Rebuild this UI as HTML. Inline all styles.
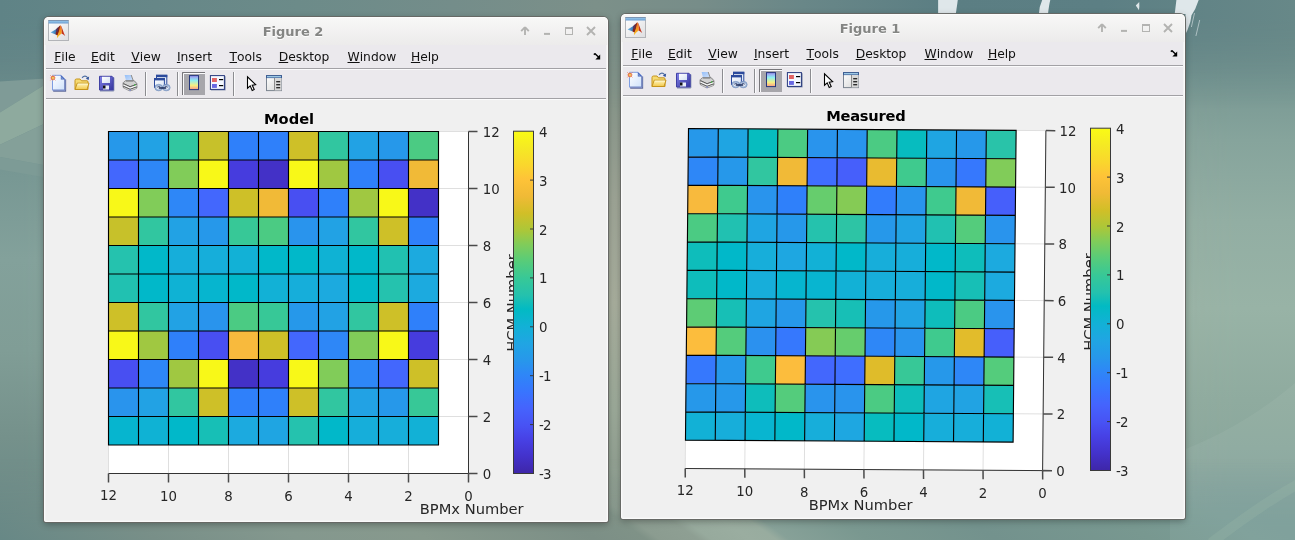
<!DOCTYPE html>
<html><head><meta charset="utf-8"><title>Figures</title><style>
html,body{margin:0;padding:0}
body{font-kerning:none;width:1295px;height:540px;overflow:hidden;position:relative;background:#6f908e;font-family:"DejaVu Sans","Liberation Sans",sans-serif;}
#bg{position:absolute;left:0;top:0}
.win{position:absolute;width:564px;height:505px;border-radius:5px 5px 2px 2px;background:#f3f3f3;box-shadow:0 0 0 1px rgba(102,103,100,.95),0 2px 7px rgba(0,0,0,.33);}
.win::after{content:"";position:absolute;left:0;top:0;right:0;bottom:0;border:1px solid rgba(255,255,255,.6);border-radius:4px 4px 2px 2px;pointer-events:none}
.tb{position:absolute;left:0;top:0;width:564px;height:28px;background:linear-gradient(#f8f8f7,#ecebeb);border-radius:5px 5px 0 0}
.tt{will-change:transform;position:absolute;left:29px;width:440px;top:7px;text-align:center;font-weight:bold;font-size:13px;line-height:16px;color:#848583;text-shadow:0 1px 0 rgba(255,255,255,.9)}
.ico{position:absolute;left:4px;top:3px}
.btns{position:absolute;left:470px;top:6px}
.menu{will-change:transform;position:absolute;left:2px;top:28px;width:560px;height:23px;background:#ebe9ed}
.menu span.m{position:absolute;top:4px;font-size:12.3px;line-height:16px;color:#111;white-space:nowrap}
.menu span.m::first-letter{text-decoration:underline;text-decoration-thickness:1px;text-underline-offset:0.6px}
.sep1{position:absolute;left:2px;top:51px;width:560px;height:1px;background:#a2a1a5}
.sep1b{position:absolute;left:2px;top:52px;width:560px;height:1px;background:#fbfbfc}
.tool{position:absolute;left:2px;top:53px;width:560px;height:28px;background:#ebe9ed}
.sep2{position:absolute;left:2px;top:81px;width:560px;height:1px;background:#a2a1a5}
.sep2b{position:absolute;left:2px;top:82px;width:560px;height:1px;background:#fbfbfc}
.fig{position:absolute;left:2px;top:83px;width:560px;height:420px;background:#f0f0f0}
.plot{position:absolute;left:0;top:0;will-change:transform}
.plot text{font-family:"DejaVu Sans","Liberation Sans",sans-serif}
</style></head><body>
<svg id="bg" width="1295" height="540" viewBox="0 0 1295 540"><defs><linearGradient id="gL" x1="0" y1="0" x2="0" y2="1"><stop offset="0" stop-color="#618385"/><stop offset="0.11" stop-color="#698989"/><stop offset="0.33" stop-color="#789894"/><stop offset="0.48" stop-color="#83a19b"/><stop offset="0.65" stop-color="#809d96"/><stop offset="0.81" stop-color="#75918b"/><stop offset="1" stop-color="#678886"/></linearGradient><linearGradient id="gC" x1="0" y1="0" x2="0" y2="1"><stop offset="0" stop-color="#7c9089"/><stop offset="0.09" stop-color="#82938a"/><stop offset="0.19" stop-color="#8a988c"/><stop offset="0.37" stop-color="#9ea596"/><stop offset="0.56" stop-color="#a8ae9d"/><stop offset="0.76" stop-color="#9caa99"/><stop offset="0.93" stop-color="#8c9b8e"/><stop offset="1" stop-color="#7c8f86"/></linearGradient><linearGradient id="gR" x1="0" y1="0" x2="0" y2="1"><stop offset="0" stop-color="#668688"/><stop offset="0.06" stop-color="#6c8c8a"/><stop offset="0.15" stop-color="#789893"/><stop offset="0.26" stop-color="#86a49c"/><stop offset="0.41" stop-color="#92aea3"/><stop offset="0.57" stop-color="#98b3a6"/><stop offset="0.74" stop-color="#8fab9f"/><stop offset="0.83" stop-color="#8ba89d"/><stop offset="0.93" stop-color="#82a29a"/><stop offset="1" stop-color="#7b9d97"/></linearGradient><linearGradient id="gT" x1="0" y1="0" x2="1" y2="0"><stop offset="0" stop-color="#5f8386"/><stop offset="0.12" stop-color="#668788"/><stop offset="0.23" stop-color="#6c8b89"/><stop offset="0.35" stop-color="#748d8a"/><stop offset="0.46" stop-color="#7c9089"/><stop offset="0.54" stop-color="#778d89"/><stop offset="0.62" stop-color="#698788"/><stop offset="0.73" stop-color="#5b7e83"/><stop offset="0.85" stop-color="#5c7f84"/><stop offset="1" stop-color="#678888"/></linearGradient><linearGradient id="gB" gradientUnits="userSpaceOnUse" x1="0" y1="0" x2="1295" y2="0"><stop offset="0" stop-color="#678886"/><stop offset="0.12" stop-color="#788f88"/><stop offset="0.23" stop-color="#84988e"/><stop offset="0.33" stop-color="#87998d"/><stop offset="0.46" stop-color="#7c8f86"/><stop offset="0.5" stop-color="#7f9287"/><stop offset="0.51" stop-color="#8b9c90"/><stop offset="0.54" stop-color="#8e9f93"/><stop offset="0.55" stop-color="#97aa9d"/><stop offset="0.58" stop-color="#9aada0"/><stop offset="0.6" stop-color="#98ac9f"/><stop offset="0.61" stop-color="#87a198"/><stop offset="0.67" stop-color="#7a9890"/><stop offset="0.77" stop-color="#73928d"/><stop offset="0.89" stop-color="#789890"/><stop offset="0.97" stop-color="#7b9d97"/><stop offset="1" stop-color="#7a9c97"/></linearGradient><linearGradient id="aL" x1="0" y1="0" x2="1" y2="0"><stop offset="0" stop-color="#fff"/><stop offset="0.0154" stop-color="#fff"/><stop offset="0.474" stop-color="#000"/><stop offset="1" stop-color="#000"/></linearGradient><linearGradient id="aR" x1="0" y1="0" x2="1" y2="0"><stop offset="0" stop-color="#000"/><stop offset="0.474" stop-color="#000"/><stop offset="0.9575" stop-color="#fff"/><stop offset="1" stop-color="#fff"/></linearGradient><linearGradient id="aT" x1="0" y1="0" x2="0" y2="1"><stop offset="0" stop-color="#fff"/><stop offset="0.03" stop-color="#fff"/><stop offset="0.2" stop-color="#000"/><stop offset="1" stop-color="#000"/></linearGradient><linearGradient id="aB" x1="0" y1="0" x2="0" y2="1"><stop offset="0" stop-color="#000"/><stop offset="0.85" stop-color="#000"/><stop offset="0.975" stop-color="#fff"/><stop offset="1" stop-color="#fff"/></linearGradient><mask id="mL" maskUnits="userSpaceOnUse" x="0" y="0" width="1295" height="540"><rect width="1295" height="540" fill="url(#aL)"/></mask><mask id="mR" maskUnits="userSpaceOnUse" x="0" y="0" width="1295" height="540"><rect width="1295" height="540" fill="url(#aR)"/></mask><mask id="mT" maskUnits="userSpaceOnUse" x="0" y="0" width="1295" height="540"><rect width="1295" height="540" fill="url(#aT)"/></mask><mask id="mB" maskUnits="userSpaceOnUse" x="-300" y="0" width="1900" height="540"><rect x="-300" width="1900" height="540" fill="url(#aB)"/></mask></defs><rect width="1295" height="540" fill="url(#gC)"/><rect width="1295" height="540" fill="url(#gL)" mask="url(#mL)"/><rect width="1295" height="540" fill="url(#gR)" mask="url(#mR)"/><rect width="1295" height="540" fill="url(#gT)" mask="url(#mT)"/><rect x="-300" width="1900" height="540" fill="url(#gB)" mask="url(#mB)" transform="translate(-756 0) skewX(54.46)"/><polygon points="0,81.5 46,78.5 46,84 0,112.5" fill="#7f9b97"/><polygon points="0,112.5 46,84 46,123 0,144.7" fill="#8eaa9e"/><polygon points="0,144.7 46,123 46,165.5 0,157" fill="#84a099"/><polygon points="0,157 46,165.5 46,177.4 0,169.6" fill="#7d9b96"/><path d="M1170,455 Q1240,430 1295,383 L1295,540 L1170,540Z" fill="#fff" opacity=".05"/><path d="M1211,543 Q1262,504 1298,484" fill="none" stroke="#a6c4b0" stroke-width="10" opacity=".2"/><g fill="#dfe7ea"><polygon points="938.1,0 957.8,0 955.8,14 938.1,14"/><path d="M1042.2,0 L1050.3,0 Q1049,5 1048,14 L1038.9,14 Q1039,7 1042.2,0Z"/><path d="M1139.2,2 L1135.8,5.6 L1139,10.2 Q1139.6,6 1139.2,2Z"/><path d="M1176.4,0 L1198.7,0 L1195.2,9 L1191.5,15.3 L1190.3,22 L1187.5,30 L1185.5,34 L1185.5,14 L1174.7,14Z"/><path d="M1194.5,13 L1191.4,27 M1199.7,20 L1195.9,36" stroke="#dfe7ea" stroke-width=".8" fill="none" opacity=".75"/></g></svg>
<div class="win" style="left:44px;top:17px"><div class="tb"><svg class="ico" width="21" height="21" viewBox="0 0 21 21">
<defs><linearGradient id="ib" x1="0" y1="0" x2="1" y2="1"><stop offset="0" stop-color="#ffffff"/><stop offset="1" stop-color="#dedee0"/></linearGradient>
<linearGradient id="it" x1="0" y1="0" x2="0" y2="1"><stop offset="0" stop-color="#4676ae"/><stop offset="0.34" stop-color="#8cbee6"/><stop offset="1" stop-color="#6a9cd0"/></linearGradient>
<linearGradient id="ibl" x1="0" y1="0" x2="1" y2="0"><stop offset="0" stop-color="#6ab8e8"/><stop offset="1" stop-color="#2c5c9e"/></linearGradient>
<linearGradient id="ior" x1="0" y1="0" x2="0" y2="1"><stop offset="0" stop-color="#ee6c18"/><stop offset="0.55" stop-color="#f69a1e"/><stop offset="1" stop-color="#f8c424"/></linearGradient></defs>
<rect x="0.5" y="0.5" width="20" height="20" fill="url(#ib)" stroke="#b2b4b8"/>
<rect x="0.5" y="0.5" width="20" height="3" fill="url(#it)"/>
<path d="M2.6,12.4 L8.4,9 L10.2,10.8 L7.6,14.4Z" fill="url(#ibl)"/>
<path d="M7.6,14.4 L8.4,9 L12.3,5.2 L11.8,10 L10,15.8Z" fill="#86241a"/>
<path d="M8.4,9 L10.4,7 L9.6,11.6 L8.2,12.4Z" fill="#4a3a6a"/>
<path d="M12.3,5.2 Q13.2,6 13.8,9.5 Q14,12.5 13.6,13.6 Q11.2,15.2 8.9,18.2 Q8.6,16.4 10,14 Q11.6,10.5 12.3,5.2Z" fill="url(#ior)"/>
<path d="M12.3,5.2 Q13.4,5.6 14.7,9.8 Q15.9,13.8 17.2,15.9 Q15.2,14.3 13.6,13.6 Q14,12 13.8,9.5 Q13.2,6 12.3,5.2Z" fill="#c4321a"/>
</svg><div class="tt">Figure 2</div><svg class="btns" width="90" height="16" viewBox="470 6 90 16"><path d="M481,10.2 L477.2,14.2 M481,10.2 L484.8,14.2 M481,10.6 L481,17.9" stroke="#b3b3b1" stroke-width="1.9" fill="none" stroke-linecap="butt"/><rect x="500" y="15.9" width="6" height="2" fill="#b3b3b1"/><rect x="521.5" y="10.5" width="7" height="7" fill="none" stroke="#b3b3b1" stroke-width="1"/><rect x="521" y="10" width="8" height="2" fill="#b3b3b1"/><path d="M543,10 L551,18 M551,10 L543,18" stroke="#b3b3b1" stroke-width="1.9" fill="none"/></svg></div><div class="menu"><span class="m" style="left:8.2px">File</span><span class="m" style="left:45px">Edit</span><span class="m" style="left:85.3px">View</span><span class="m" style="left:130.9px">Insert</span><span class="m" style="left:183.5px">Tools</span><span class="m" style="left:232.7px">Desktop</span><span class="m" style="left:301.5px">Window</span><span class="m" style="left:364.9px">Help</span><svg style="position:absolute;left:546.6px;top:8.4px" width="9" height="8" viewBox="0 0 9 8"><path d="M0.8,1.6 L2,0.7 L5.8,4.2" stroke="#000" stroke-width="1.4" fill="none"/><path d="M7.2,1.4 L7.2,6.4 L2.4,6.4 Z" fill="#000"/></svg></div><div class="sep1"></div><div class="sep1b"></div><div class="tool"><svg style="position:absolute;left:0;top:0" width="560" height="28" viewBox="2 53 560 28"><defs>
<linearGradient id="pg" x1="0" y1="0" x2="1" y2="1"><stop offset="0" stop-color="#ffffff"/><stop offset="1" stop-color="#cfe2fb"/></linearGradient>
<linearGradient id="fo" x1="0" y1="0" x2="0" y2="1"><stop offset="0" stop-color="#fff6c0"/><stop offset="1" stop-color="#f2c84a"/></linearGradient>
<linearGradient id="sv" x1="0" y1="0" x2="1" y2="1"><stop offset="0" stop-color="#8282ea"/><stop offset="1" stop-color="#34349c"/></linearGradient>
<linearGradient id="cb" x1="0" y1="0" x2="0" y2="1"><stop offset="0" stop-color="#a08cf2"/><stop offset="0.35" stop-color="#8ff0f0"/><stop offset="0.7" stop-color="#f4f082"/><stop offset="1" stop-color="#fa9a86"/></linearGradient>
<linearGradient id="pr" x1="0" y1="0" x2="0" y2="1"><stop offset="0" stop-color="#e8e8e8"/><stop offset="1" stop-color="#8c8c8c"/></linearGradient>
<linearGradient id="pp" x1="0" y1="0" x2="1" y2="1"><stop offset="0" stop-color="#94bef8"/><stop offset="1" stop-color="#d2e2fa"/></linearGradient>
<linearGradient id="wn" x1="0" y1="0" x2="1" y2="1"><stop offset="0" stop-color="#ffffff"/><stop offset="1" stop-color="#d6e2f4"/></linearGradient>
<linearGradient id="pi" x1="0" y1="0" x2="1" y2="1"><stop offset="0" stop-color="#ffffff"/><stop offset="1" stop-color="#d4d4d4"/></linearGradient>
</defs><g><path d="M9.2,74.1 L21.6,74.1 L21.6,62.4" fill="none" stroke="#626c9c" stroke-width="1.1"/><path d="M8.5,58.3 L17,58.3 L20.8,62.1 L20.8,73.2 L8.5,73.2Z" fill="url(#pg)" stroke="#7d9de2" stroke-width="1"/><path d="M20.8,62.4 L20.8,73.2 L9,73.2" fill="none" stroke="#7482b8" stroke-width="1"/><path d="M16.8,58 L21.2,62.4 L16.8,62.4Z" fill="#4660b2"/><path d="M17.4,59.8 L19.4,61.8 L17.4,61.8Z" fill="#86a8e6"/><g stroke="#e46a40" stroke-width="1" opacity=".9"><path d="M6.5,58.5 L7.5,59.5 M11.3,58.5 L10.3,59.5 M6.5,63.3 L7.5,62.3 M11.3,63.3 L10.3,62.3"/></g><g stroke="#f0a080" stroke-width=".9" opacity=".8"><path d="M8.9,57.9 L8.9,59 M8.9,62.8 L8.9,63.9 M5.9,60.9 L7,60.9 M10.8,60.9 L11.9,60.9"/></g><circle cx="8.9" cy="60.9" r="2.1" fill="#e8744a"/><rect x="8.1" y="60.1" width="1.7" height="1.7" fill="#ece65e"/></g><g><path d="M31,63.5 Q31,62 32.5,62 L36,62 L37.5,63.8 L43,63.8 Q44,63.8 44,65 L44,72.5 L31,72.5Z" fill="#f6da72" stroke="#c6941a" stroke-width="1"/><path d="M31,72.5 L33.2,66.2 L45,66.2 L43,72.5Z" fill="url(#fo)" stroke="#c6941a" stroke-width="1"/><path d="M33.8,67 L44,67" stroke="#fffbe0" stroke-width=".8" fill="none"/><path d="M38.1,60.7 Q41,57.6 43.8,60.8" fill="none" stroke="#4e6ea2" stroke-width="1.25"/><path d="M45.1,59.4 L44.7,63 L41.8,61.7Z" fill="#34549a"/></g><g><path d="M56,73.9 L69.8,73.9 L69.8,60.6" fill="none" stroke="#6a78a0" stroke-width="1"/><path d="M55.5,59.3 L68,59.3 L69.2,60.5 L69.2,73 L55.5,73Z" fill="url(#sv)" stroke="#4040a4" stroke-width="1"/><rect x="58" y="59.8" width="8" height="6.2" fill="url(#wn)"/><rect x="59" y="68.5" width="6" height="4" fill="#e8eef8"/><rect x="59" y="68.5" width="2.5" height="3" fill="#101018"/></g><g><path d="M80.6,58 L87,58 L88.9,64.2 L82.2,64.2Z" fill="url(#pp)"/><path d="M87.2,58 L89.4,64.2" stroke="#8a8a8a" stroke-width="1" fill="none"/><path d="M79,66.4 Q79,65.6 79.8,65 L81.8,63.5 L89.8,63.5 L92.2,65.6 Q93,66.4 93,67.2 L93,70.4 Q93,71.2 92,71.7 L87,73.7 Q86,74.1 85,73.6 L79.8,71 Q79,70.6 79,69.8Z" fill="#9a9a9a" stroke="#787878" stroke-width=".7"/><path d="M79.4,66 L81.9,63.9 L89.6,63.9 L92.6,66.7 L86.1,69.2Z" fill="#d2d2d2"/><path d="M82,64.3 L89.4,64.3" stroke="#8e8e8e" stroke-width=".9"/><path d="M79.4,66.6 L86.1,69.7 L92.6,67.3" fill="none" stroke="#5e5e5e" stroke-width="1"/><path d="M79.4,68 L86.1,71.1 L92.6,68.7" fill="none" stroke="#f8f8f8" stroke-width="1.3"/><path d="M79.4,69.4 L86.1,72.4 L92.6,70" fill="none" stroke="#565656" stroke-width="1"/><path d="M80,70.6 L86,73.3 L92.2,71" fill="none" stroke="#d8d8d8" stroke-width=".9"/><rect x="90" y="67.4" width="1.3" height="1.3" fill="#3cc03c"/><rect x="85.4" y="72.6" width="1.4" height="1" fill="#5a6ad0"/></g><rect x="101" y="55" width="1" height="24" fill="#8c8c90"/><rect x="102" y="55" width="1" height="24" fill="#fbfbfc"/><rect x="133" y="55" width="1" height="24" fill="#8c8c90"/><rect x="134" y="55" width="1" height="24" fill="#fbfbfc"/><rect x="189" y="55" width="1" height="24" fill="#8c8c90"/><rect x="190" y="55" width="1" height="24" fill="#fbfbfc"/><g><rect x="112.5" y="58.3" width="10.3" height="9.5" fill="url(#wn)" stroke="#2c4a9c" stroke-width="1"/><rect x="112" y="57.8" width="11.3" height="2.4" fill="#2c4a9c"/><rect x="110.5" y="61.5" width="9.9" height="9" fill="url(#wn)" stroke="#2c4a9c" stroke-width="1"/><rect x="110" y="61" width="10.9" height="2.4" fill="#2c4a9c"/><ellipse cx="114.7" cy="70.6" rx="3.2" ry="2.6" fill="#e8eef8" stroke="#9db4d6" stroke-width="1.5"/><ellipse cx="122.3" cy="70.6" rx="3.2" ry="2.6" fill="#e8eef8" stroke="#9db4d6" stroke-width="1.5"/><ellipse cx="114.7" cy="70.6" rx="3.9" ry="3.3" fill="none" stroke="#6c86b4" stroke-width=".5"/><ellipse cx="122.3" cy="70.6" rx="3.9" ry="3.3" fill="none" stroke="#6c86b4" stroke-width=".5"/><path d="M113.2,70.2 Q114.7,68.9 116.4,70" fill="none" stroke="#26386c" stroke-width=".9"/><path d="M120.6,70 Q122.3,68.9 123.8,70.2" fill="none" stroke="#26386c" stroke-width=".9"/><rect x="114.6" y="70.3" width="7.8" height="1.5" rx=".7" fill="#1a2a58"/></g><rect x="138" y="55" width="23" height="23" fill="#a7a6ab"/><path d="M138.5,78 L138.5,55.5 L161,55.5" fill="none" stroke="#77767a" stroke-width="1"/><path d="M139.5,78 L139.5,56.5 L161,56.5" fill="none" stroke="#fbfbfc" stroke-width="1"/><rect x="145.5" y="58.6" width="9" height="14" fill="url(#cb)" stroke="#26387c" stroke-width="1"/><rect x="167" y="59.2" width="14.6" height="14.2" fill="#7c88a8"/><rect x="166.4" y="58.6" width="14" height="13.8" fill="#f4f8ff" stroke="#26387c" stroke-width="1"/><rect x="168" y="61" width="4.9" height="4" fill="#e26464"/><rect x="168" y="67" width="4.9" height="3.9" fill="#6868e2"/><rect x="175" y="62" width="4.2" height="1.2" fill="#000"/><rect x="175" y="68" width="4.2" height="1.2" fill="#000"/><path d="M203.5,59.8 L203.5,71.2 L206.2,68.9 L208.2,73.4 L210.2,72.5 L208.2,68.1 L211.6,67.7Z" fill="#fff" stroke="#000" stroke-width="1.1" stroke-linejoin="miter"/><rect x="222.5" y="58.6" width="15" height="15" fill="url(#pi)" stroke="#7c8490" stroke-width="1"/><rect x="222" y="58.1" width="16" height="3" fill="#3c5c94"/><rect x="223" y="59" width="14" height="1.4" fill="#9cc8e4"/><rect x="230.5" y="61" width="7" height="12.4" fill="#d8d8d8"/><rect x="230" y="61" width="1" height="12.4" fill="#8c8c8c"/><rect x="232.2" y="64.2" width="4" height="1.1" fill="#000"/><rect x="232.2" y="67.2" width="4" height="1.1" fill="#000"/><rect x="232.2" y="70.2" width="4" height="1.1" fill="#000"/></svg></div><div class="sep2"></div><div class="sep2b"></div><div class="fig"><svg class="plot" width="560" height="420" viewBox="0 0 560 420"><defs><linearGradient id="par" x1="0" y1="1" x2="0" y2="0"><stop offset="0" stop-color="#3e26a8"/><stop offset="0.05" stop-color="#4332cb"/><stop offset="0.1" stop-color="#4741e5"/><stop offset="0.14" stop-color="#4852f4"/><stop offset="0.19" stop-color="#4563fd"/><stop offset="0.24" stop-color="#3875fe"/><stop offset="0.29" stop-color="#2e87f7"/><stop offset="0.33" stop-color="#2797eb"/><stop offset="0.38" stop-color="#20a5e3"/><stop offset="0.43" stop-color="#12b1d6"/><stop offset="0.48" stop-color="#02bac3"/><stop offset="0.52" stop-color="#24c1ae"/><stop offset="0.57" stop-color="#37c897"/><stop offset="0.62" stop-color="#57cc7a"/><stop offset="0.67" stop-color="#81cc59"/><stop offset="0.71" stop-color="#abc739"/><stop offset="0.76" stop-color="#d1bf27"/><stop offset="0.81" stop-color="#f0ba36"/><stop offset="0.86" stop-color="#fec338"/><stop offset="0.9" stop-color="#fad62d"/><stop offset="0.95" stop-color="#f5e924"/><stop offset="1" stop-color="#f9fb15"/></linearGradient></defs><polygon points="422.5,373.5 62.5,373.5 62.5,31.5 422.5,31.5" fill="#fff"/><path d="M422.5,373.5L422.5,31.5M422.5,373.5L62.5,373.5M362.5,373.5L362.5,31.5M422.5,316.5L62.5,316.5M302.5,373.5L302.5,31.5M422.5,259.5L62.5,259.5M242.5,373.5L242.5,31.5M422.5,202.5L62.5,202.5M182.5,373.5L182.5,31.5M422.5,145.5L62.5,145.5M122.5,373.5L122.5,31.5M422.5,88.5L62.5,88.5M62.5,373.5L62.5,31.5M422.5,31.5L62.5,31.5" stroke="#dfdfdf" stroke-width="1" fill="none"/><polygon points="62.5,31.5 92.5,31.5 92.5,60 62.5,60" fill="#2698ea"/><polygon points="92.5,31.5 122.5,31.5 122.5,60 92.5,60" fill="#22a2e4"/><polygon points="122.5,31.5 152.5,31.5 152.5,60 122.5,60" fill="#31c6a0"/><polygon points="152.5,31.5 182.5,31.5 182.5,60 152.5,60" fill="#c7c12a"/><polygon points="182.5,31.5 212.5,31.5 212.5,60 182.5,60" fill="#2f80fa"/><polygon points="212.5,31.5 242.5,31.5 242.5,60 212.5,60" fill="#2f80fa"/><polygon points="242.5,31.5 272.5,31.5 272.5,60 242.5,60" fill="#cec028"/><polygon points="272.5,31.5 302.5,31.5 302.5,60 272.5,60" fill="#31c6a0"/><polygon points="302.5,31.5 332.5,31.5 332.5,60 302.5,60" fill="#22a2e4"/><polygon points="332.5,31.5 362.5,31.5 362.5,60 332.5,60" fill="#2698ea"/><polygon points="362.5,31.5 392.5,31.5 392.5,60 362.5,60" fill="#4bcb83"/><polygon points="62.5,60 92.5,60 92.5,88.5 62.5,88.5" fill="#4367fd"/><polygon points="92.5,60 122.5,60 122.5,88.5 92.5,88.5" fill="#2e87f7"/><polygon points="122.5,60 152.5,60 152.5,88.5 122.5,88.5" fill="#81cc59"/><polygon points="152.5,60 182.5,60 182.5,88.5 152.5,88.5" fill="#f8f818"/><polygon points="182.5,60 212.5,60 212.5,88.5 182.5,88.5" fill="#463cde"/><polygon points="212.5,60 242.5,60 242.5,88.5 212.5,88.5" fill="#4331c7"/><polygon points="242.5,60 272.5,60 272.5,88.5 242.5,88.5" fill="#f8f818"/><polygon points="272.5,60 302.5,60 302.5,88.5 272.5,88.5" fill="#a0c841"/><polygon points="302.5,60 332.5,60 332.5,88.5 302.5,88.5" fill="#2f80fa"/><polygon points="332.5,60 362.5,60 362.5,88.5 332.5,88.5" fill="#484ff2"/><polygon points="362.5,60 392.5,60 392.5,88.5 362.5,88.5" fill="#f1ba37"/><polygon points="62.5,88.5 92.5,88.5 92.5,117 62.5,117" fill="#f8f818"/><polygon points="92.5,88.5 122.5,88.5 122.5,117 92.5,117" fill="#81cc59"/><polygon points="122.5,88.5 152.5,88.5 152.5,117 122.5,117" fill="#2e87f7"/><polygon points="152.5,88.5 182.5,88.5 182.5,117 152.5,117" fill="#4367fd"/><polygon points="182.5,88.5 212.5,88.5 212.5,117 182.5,117" fill="#cec028"/><polygon points="212.5,88.5 242.5,88.5 242.5,117 212.5,117" fill="#f1ba37"/><polygon points="242.5,88.5 272.5,88.5 272.5,117 242.5,117" fill="#484ff2"/><polygon points="272.5,88.5 302.5,88.5 302.5,117 272.5,117" fill="#2f80fa"/><polygon points="302.5,88.5 332.5,88.5 332.5,117 302.5,117" fill="#a0c841"/><polygon points="332.5,88.5 362.5,88.5 362.5,117 332.5,117" fill="#f8f818"/><polygon points="362.5,88.5 392.5,88.5 392.5,117 362.5,117" fill="#4331c7"/><polygon points="62.5,117 92.5,117 92.5,145.5 62.5,145.5" fill="#c7c12a"/><polygon points="92.5,117 122.5,117 122.5,145.5 92.5,145.5" fill="#31c6a0"/><polygon points="122.5,117 152.5,117 152.5,145.5 122.5,145.5" fill="#22a2e4"/><polygon points="152.5,117 182.5,117 182.5,145.5 152.5,145.5" fill="#2698ea"/><polygon points="182.5,117 212.5,117 212.5,145.5 182.5,145.5" fill="#37c897"/><polygon points="212.5,117 242.5,117 242.5,145.5 212.5,145.5" fill="#4bcb83"/><polygon points="242.5,117 272.5,117 272.5,145.5 242.5,145.5" fill="#2994ed"/><polygon points="272.5,117 302.5,117 302.5,145.5 272.5,145.5" fill="#22a2e4"/><polygon points="302.5,117 332.5,117 332.5,145.5 302.5,145.5" fill="#31c6a0"/><polygon points="332.5,117 362.5,117 362.5,145.5 332.5,145.5" fill="#cec028"/><polygon points="362.5,117 392.5,117 392.5,145.5 362.5,145.5" fill="#2f80fa"/><polygon points="62.5,145.5 92.5,145.5 92.5,174 62.5,174" fill="#25c2ae"/><polygon points="92.5,145.5 122.5,145.5 122.5,174 92.5,174" fill="#01b8c9"/><polygon points="122.5,145.5 152.5,145.5 152.5,174 122.5,174" fill="#16aeda"/><polygon points="152.5,145.5 182.5,145.5 182.5,174 152.5,174" fill="#16aeda"/><polygon points="182.5,145.5 212.5,145.5 212.5,174 182.5,174" fill="#12b1d6"/><polygon points="212.5,145.5 242.5,145.5 242.5,174 212.5,174" fill="#01b8c9"/><polygon points="242.5,145.5 272.5,145.5 272.5,174 242.5,174" fill="#01b8c9"/><polygon points="272.5,145.5 302.5,145.5 302.5,174 272.5,174" fill="#0fb2d4"/><polygon points="302.5,145.5 332.5,145.5 332.5,174 302.5,174" fill="#01b8c9"/><polygon points="332.5,145.5 362.5,145.5 362.5,174 332.5,174" fill="#21c1b1"/><polygon points="362.5,145.5 392.5,145.5 392.5,174 362.5,174" fill="#1caadf"/><polygon points="62.5,174 92.5,174 92.5,202.5 62.5,202.5" fill="#21c1b1"/><polygon points="92.5,174 122.5,174 122.5,202.5 92.5,202.5" fill="#01b8c9"/><polygon points="122.5,174 152.5,174 152.5,202.5 122.5,202.5" fill="#0fb2d4"/><polygon points="152.5,174 182.5,174 182.5,202.5 152.5,202.5" fill="#06b5cf"/><polygon points="182.5,174 212.5,174 212.5,202.5 182.5,202.5" fill="#01b8c9"/><polygon points="212.5,174 242.5,174 242.5,202.5 212.5,202.5" fill="#12b1d6"/><polygon points="242.5,174 272.5,174 272.5,202.5 242.5,202.5" fill="#16aeda"/><polygon points="272.5,174 302.5,174 302.5,202.5 272.5,202.5" fill="#1caadf"/><polygon points="302.5,174 332.5,174 332.5,202.5 302.5,202.5" fill="#01b8c9"/><polygon points="332.5,174 362.5,174 362.5,202.5 332.5,202.5" fill="#25c2ae"/><polygon points="362.5,174 392.5,174 392.5,202.5 362.5,202.5" fill="#1caadf"/><polygon points="62.5,202.5 92.5,202.5 92.5,231 62.5,231" fill="#cec028"/><polygon points="92.5,202.5 122.5,202.5 122.5,231 92.5,231" fill="#31c6a0"/><polygon points="122.5,202.5 152.5,202.5 152.5,231 122.5,231" fill="#22a2e4"/><polygon points="152.5,202.5 182.5,202.5 182.5,231 152.5,231" fill="#2994ed"/><polygon points="182.5,202.5 212.5,202.5 212.5,231 182.5,231" fill="#4bcb83"/><polygon points="212.5,202.5 242.5,202.5 242.5,231 212.5,231" fill="#37c897"/><polygon points="242.5,202.5 272.5,202.5 272.5,231 242.5,231" fill="#2698ea"/><polygon points="272.5,202.5 302.5,202.5 302.5,231 272.5,231" fill="#22a2e4"/><polygon points="302.5,202.5 332.5,202.5 332.5,231 302.5,231" fill="#31c6a0"/><polygon points="332.5,202.5 362.5,202.5 362.5,231 332.5,231" fill="#cec028"/><polygon points="362.5,202.5 392.5,202.5 392.5,231 362.5,231" fill="#2f80fa"/><polygon points="62.5,231 92.5,231 92.5,259.5 62.5,259.5" fill="#f8f818"/><polygon points="92.5,231 122.5,231 122.5,259.5 92.5,259.5" fill="#a0c841"/><polygon points="122.5,231 152.5,231 152.5,259.5 122.5,259.5" fill="#2f80fa"/><polygon points="152.5,231 182.5,231 182.5,259.5 152.5,259.5" fill="#484ff2"/><polygon points="182.5,231 212.5,231 212.5,259.5 182.5,259.5" fill="#f8ba3d"/><polygon points="212.5,231 242.5,231 242.5,259.5 212.5,259.5" fill="#cec028"/><polygon points="242.5,231 272.5,231 272.5,259.5 242.5,259.5" fill="#4367fd"/><polygon points="272.5,231 302.5,231 302.5,259.5 272.5,259.5" fill="#2e87f7"/><polygon points="302.5,231 332.5,231 332.5,259.5 302.5,259.5" fill="#81cc59"/><polygon points="332.5,231 362.5,231 362.5,259.5 332.5,259.5" fill="#f8f818"/><polygon points="362.5,231 392.5,231 392.5,259.5 362.5,259.5" fill="#463cde"/><polygon points="62.5,259.5 92.5,259.5 92.5,288 62.5,288" fill="#484ff2"/><polygon points="92.5,259.5 122.5,259.5 122.5,288 92.5,288" fill="#2e87f7"/><polygon points="122.5,259.5 152.5,259.5 152.5,288 122.5,288" fill="#a0c841"/><polygon points="152.5,259.5 182.5,259.5 182.5,288 152.5,288" fill="#f8f818"/><polygon points="182.5,259.5 212.5,259.5 212.5,288 182.5,288" fill="#4331c7"/><polygon points="212.5,259.5 242.5,259.5 242.5,288 212.5,288" fill="#463cde"/><polygon points="242.5,259.5 272.5,259.5 272.5,288 242.5,288" fill="#f8f818"/><polygon points="272.5,259.5 302.5,259.5 302.5,288 272.5,288" fill="#81cc59"/><polygon points="302.5,259.5 332.5,259.5 332.5,288 302.5,288" fill="#2e87f7"/><polygon points="332.5,259.5 362.5,259.5 362.5,288 332.5,288" fill="#4367fd"/><polygon points="362.5,259.5 392.5,259.5 392.5,288 362.5,288" fill="#cec028"/><polygon points="62.5,288 92.5,288 92.5,316.5 62.5,316.5" fill="#2994ed"/><polygon points="92.5,288 122.5,288 122.5,316.5 92.5,316.5" fill="#22a2e4"/><polygon points="122.5,288 152.5,288 152.5,316.5 122.5,316.5" fill="#31c6a0"/><polygon points="152.5,288 182.5,288 182.5,316.5 152.5,316.5" fill="#cec028"/><polygon points="182.5,288 212.5,288 212.5,316.5 182.5,316.5" fill="#2f80fa"/><polygon points="212.5,288 242.5,288 242.5,316.5 212.5,316.5" fill="#2f80fa"/><polygon points="242.5,288 272.5,288 272.5,316.5 242.5,316.5" fill="#cec028"/><polygon points="272.5,288 302.5,288 302.5,316.5 272.5,316.5" fill="#31c6a0"/><polygon points="302.5,288 332.5,288 332.5,316.5 302.5,316.5" fill="#22a2e4"/><polygon points="332.5,288 362.5,288 362.5,316.5 332.5,316.5" fill="#2698ea"/><polygon points="362.5,288 392.5,288 392.5,316.5 362.5,316.5" fill="#37c897"/><polygon points="62.5,316.5 92.5,316.5 92.5,345 62.5,345" fill="#06b5cf"/><polygon points="92.5,316.5 122.5,316.5 122.5,345 92.5,345" fill="#0fb2d4"/><polygon points="122.5,316.5 152.5,316.5 152.5,345 122.5,345" fill="#01b8c9"/><polygon points="152.5,316.5 182.5,316.5 182.5,345 152.5,345" fill="#17bfb6"/><polygon points="182.5,316.5 212.5,316.5 212.5,345 182.5,345" fill="#1caadf"/><polygon points="212.5,316.5 242.5,316.5 242.5,345 212.5,345" fill="#1fa5e2"/><polygon points="242.5,316.5 272.5,316.5 272.5,345 242.5,345" fill="#25c2ae"/><polygon points="272.5,316.5 302.5,316.5 302.5,345 272.5,345" fill="#01b8c9"/><polygon points="302.5,316.5 332.5,316.5 332.5,345 302.5,345" fill="#16aeda"/><polygon points="332.5,316.5 362.5,316.5 362.5,345 332.5,345" fill="#17aeda"/><polygon points="362.5,316.5 392.5,316.5 392.5,345 362.5,345" fill="#12b1d6"/><path d="M362.5,345L362.5,31.5M392.5,316.5L62.5,316.5M332.5,345L332.5,31.5M392.5,288L62.5,288M302.5,345L302.5,31.5M392.5,259.5L62.5,259.5M272.5,345L272.5,31.5M392.5,231L62.5,231M242.5,345L242.5,31.5M392.5,202.5L62.5,202.5M212.5,345L212.5,31.5M392.5,174L62.5,174M182.5,345L182.5,31.5M392.5,145.5L62.5,145.5M152.5,345L152.5,31.5M392.5,117L62.5,117M122.5,345L122.5,31.5M392.5,88.5L62.5,88.5M92.5,345L92.5,31.5M392.5,60L62.5,60M392.5,345L62.5,345L62.5,31.5L392.5,31.5Z" stroke="#000" stroke-width="1.12" fill="none" stroke-linejoin="miter"/><path d="M62.5,373.5L422.5,373.5L422.5,31.5" stroke="#333" stroke-width="1" fill="none"/><path d="M422.5,373.5l0,9M422.5,373.5l9,0M362.5,373.5l0,9M422.5,316.5l9,0M302.5,373.5l0,9M422.5,259.5l9,0M242.5,373.5l0,9M422.5,202.5l9,0M182.5,373.5l0,9M422.5,145.5l9,0M122.5,373.5l0,9M422.5,88.5l9,0M62.5,373.5l0,9M422.5,31.5l9,0" stroke="#4a4a4a" stroke-width="1.5" fill="none"/><g font-size="13.33" fill="#262626"><text x="422.5" y="401.2" text-anchor="middle">0</text><text x="436.8" y="379.4">0</text><text x="362.5" y="401.2" text-anchor="middle">2</text><text x="436.8" y="322.4">2</text><text x="302.5" y="401.2" text-anchor="middle">4</text><text x="436.8" y="265.4">4</text><text x="242.5" y="401.2" text-anchor="middle">6</text><text x="436.8" y="208.4">6</text><text x="182.5" y="401.2" text-anchor="middle">8</text><text x="436.8" y="151.4">8</text><text x="122.5" y="401.2" text-anchor="middle">10</text><text x="436.8" y="94.4">10</text><text x="62.5" y="400.2" text-anchor="middle">12</text><text x="436.8" y="37.4">12</text></g><text transform="translate(470.7,203) rotate(-90)" font-size="14.67" fill="#262626" text-anchor="middle">HCM Number</text><rect x="467.5" y="31.2" width="20" height="342.3" fill="url(#par)" stroke="#3a3a3a" stroke-width="1"/><path d="M487.5,324.6l-3.5,0M487.5,275.7l-3.5,0M487.5,226.8l-3.5,0M487.5,177.9l-3.5,0M487.5,129l-3.5,0M487.5,80.1l-3.5,0" stroke="#3a3a3a" stroke-width="1" fill="none"/><g font-size="13.33" fill="#262626"><text x="493.1" y="379" letter-spacing="-0.8">-3</text><text x="493.1" y="330.1" letter-spacing="-0.8">-2</text><text x="493.1" y="281.2" letter-spacing="-0.8">-1</text><text x="493.1" y="232.3">0</text><text x="493.1" y="183.4">1</text><text x="493.1" y="134.5">2</text><text x="493.1" y="85.6">3</text><text x="493.1" y="36.7">4</text></g><text x="425.7" y="414" font-size="14.67" fill="#262626" text-anchor="middle">BPMx Number</text><text x="243.1" y="23.9" font-size="14.67" font-weight="bold" fill="#000" text-anchor="middle">Model</text></svg></div></div>
<div class="win" style="left:621px;top:14px"><div class="tb"><svg class="ico" width="21" height="21" viewBox="0 0 21 21">
<defs><linearGradient id="ib" x1="0" y1="0" x2="1" y2="1"><stop offset="0" stop-color="#ffffff"/><stop offset="1" stop-color="#dedee0"/></linearGradient>
<linearGradient id="it" x1="0" y1="0" x2="0" y2="1"><stop offset="0" stop-color="#4676ae"/><stop offset="0.34" stop-color="#8cbee6"/><stop offset="1" stop-color="#6a9cd0"/></linearGradient>
<linearGradient id="ibl" x1="0" y1="0" x2="1" y2="0"><stop offset="0" stop-color="#6ab8e8"/><stop offset="1" stop-color="#2c5c9e"/></linearGradient>
<linearGradient id="ior" x1="0" y1="0" x2="0" y2="1"><stop offset="0" stop-color="#ee6c18"/><stop offset="0.55" stop-color="#f69a1e"/><stop offset="1" stop-color="#f8c424"/></linearGradient></defs>
<rect x="0.5" y="0.5" width="20" height="20" fill="url(#ib)" stroke="#b2b4b8"/>
<rect x="0.5" y="0.5" width="20" height="3" fill="url(#it)"/>
<path d="M2.6,12.4 L8.4,9 L10.2,10.8 L7.6,14.4Z" fill="url(#ibl)"/>
<path d="M7.6,14.4 L8.4,9 L12.3,5.2 L11.8,10 L10,15.8Z" fill="#86241a"/>
<path d="M8.4,9 L10.4,7 L9.6,11.6 L8.2,12.4Z" fill="#4a3a6a"/>
<path d="M12.3,5.2 Q13.2,6 13.8,9.5 Q14,12.5 13.6,13.6 Q11.2,15.2 8.9,18.2 Q8.6,16.4 10,14 Q11.6,10.5 12.3,5.2Z" fill="url(#ior)"/>
<path d="M12.3,5.2 Q13.4,5.6 14.7,9.8 Q15.9,13.8 17.2,15.9 Q15.2,14.3 13.6,13.6 Q14,12 13.8,9.5 Q13.2,6 12.3,5.2Z" fill="#c4321a"/>
</svg><div class="tt">Figure 1</div><svg class="btns" width="90" height="16" viewBox="470 6 90 16"><path d="M481,10.2 L477.2,14.2 M481,10.2 L484.8,14.2 M481,10.6 L481,17.9" stroke="#b3b3b1" stroke-width="1.9" fill="none" stroke-linecap="butt"/><rect x="500" y="15.9" width="6" height="2" fill="#b3b3b1"/><rect x="521.5" y="10.5" width="7" height="7" fill="none" stroke="#b3b3b1" stroke-width="1"/><rect x="521" y="10" width="8" height="2" fill="#b3b3b1"/><path d="M543,10 L551,18 M551,10 L543,18" stroke="#b3b3b1" stroke-width="1.9" fill="none"/></svg></div><div class="menu"><span class="m" style="left:8.2px">File</span><span class="m" style="left:45px">Edit</span><span class="m" style="left:85.3px">View</span><span class="m" style="left:130.9px">Insert</span><span class="m" style="left:183.5px">Tools</span><span class="m" style="left:232.7px">Desktop</span><span class="m" style="left:301.5px">Window</span><span class="m" style="left:364.9px">Help</span><svg style="position:absolute;left:546.6px;top:8.4px" width="9" height="8" viewBox="0 0 9 8"><path d="M0.8,1.6 L2,0.7 L5.8,4.2" stroke="#000" stroke-width="1.4" fill="none"/><path d="M7.2,1.4 L7.2,6.4 L2.4,6.4 Z" fill="#000"/></svg></div><div class="sep1"></div><div class="sep1b"></div><div class="tool"><svg style="position:absolute;left:0;top:0" width="560" height="28" viewBox="2 53 560 28"><defs>
<linearGradient id="pg" x1="0" y1="0" x2="1" y2="1"><stop offset="0" stop-color="#ffffff"/><stop offset="1" stop-color="#cfe2fb"/></linearGradient>
<linearGradient id="fo" x1="0" y1="0" x2="0" y2="1"><stop offset="0" stop-color="#fff6c0"/><stop offset="1" stop-color="#f2c84a"/></linearGradient>
<linearGradient id="sv" x1="0" y1="0" x2="1" y2="1"><stop offset="0" stop-color="#8282ea"/><stop offset="1" stop-color="#34349c"/></linearGradient>
<linearGradient id="cb" x1="0" y1="0" x2="0" y2="1"><stop offset="0" stop-color="#a08cf2"/><stop offset="0.35" stop-color="#8ff0f0"/><stop offset="0.7" stop-color="#f4f082"/><stop offset="1" stop-color="#fa9a86"/></linearGradient>
<linearGradient id="pr" x1="0" y1="0" x2="0" y2="1"><stop offset="0" stop-color="#e8e8e8"/><stop offset="1" stop-color="#8c8c8c"/></linearGradient>
<linearGradient id="pp" x1="0" y1="0" x2="1" y2="1"><stop offset="0" stop-color="#94bef8"/><stop offset="1" stop-color="#d2e2fa"/></linearGradient>
<linearGradient id="wn" x1="0" y1="0" x2="1" y2="1"><stop offset="0" stop-color="#ffffff"/><stop offset="1" stop-color="#d6e2f4"/></linearGradient>
<linearGradient id="pi" x1="0" y1="0" x2="1" y2="1"><stop offset="0" stop-color="#ffffff"/><stop offset="1" stop-color="#d4d4d4"/></linearGradient>
</defs><g><path d="M9.2,74.1 L21.6,74.1 L21.6,62.4" fill="none" stroke="#626c9c" stroke-width="1.1"/><path d="M8.5,58.3 L17,58.3 L20.8,62.1 L20.8,73.2 L8.5,73.2Z" fill="url(#pg)" stroke="#7d9de2" stroke-width="1"/><path d="M20.8,62.4 L20.8,73.2 L9,73.2" fill="none" stroke="#7482b8" stroke-width="1"/><path d="M16.8,58 L21.2,62.4 L16.8,62.4Z" fill="#4660b2"/><path d="M17.4,59.8 L19.4,61.8 L17.4,61.8Z" fill="#86a8e6"/><g stroke="#e46a40" stroke-width="1" opacity=".9"><path d="M6.5,58.5 L7.5,59.5 M11.3,58.5 L10.3,59.5 M6.5,63.3 L7.5,62.3 M11.3,63.3 L10.3,62.3"/></g><g stroke="#f0a080" stroke-width=".9" opacity=".8"><path d="M8.9,57.9 L8.9,59 M8.9,62.8 L8.9,63.9 M5.9,60.9 L7,60.9 M10.8,60.9 L11.9,60.9"/></g><circle cx="8.9" cy="60.9" r="2.1" fill="#e8744a"/><rect x="8.1" y="60.1" width="1.7" height="1.7" fill="#ece65e"/></g><g><path d="M31,63.5 Q31,62 32.5,62 L36,62 L37.5,63.8 L43,63.8 Q44,63.8 44,65 L44,72.5 L31,72.5Z" fill="#f6da72" stroke="#c6941a" stroke-width="1"/><path d="M31,72.5 L33.2,66.2 L45,66.2 L43,72.5Z" fill="url(#fo)" stroke="#c6941a" stroke-width="1"/><path d="M33.8,67 L44,67" stroke="#fffbe0" stroke-width=".8" fill="none"/><path d="M38.1,60.7 Q41,57.6 43.8,60.8" fill="none" stroke="#4e6ea2" stroke-width="1.25"/><path d="M45.1,59.4 L44.7,63 L41.8,61.7Z" fill="#34549a"/></g><g><path d="M56,73.9 L69.8,73.9 L69.8,60.6" fill="none" stroke="#6a78a0" stroke-width="1"/><path d="M55.5,59.3 L68,59.3 L69.2,60.5 L69.2,73 L55.5,73Z" fill="url(#sv)" stroke="#4040a4" stroke-width="1"/><rect x="58" y="59.8" width="8" height="6.2" fill="url(#wn)"/><rect x="59" y="68.5" width="6" height="4" fill="#e8eef8"/><rect x="59" y="68.5" width="2.5" height="3" fill="#101018"/></g><g><path d="M80.6,58 L87,58 L88.9,64.2 L82.2,64.2Z" fill="url(#pp)"/><path d="M87.2,58 L89.4,64.2" stroke="#8a8a8a" stroke-width="1" fill="none"/><path d="M79,66.4 Q79,65.6 79.8,65 L81.8,63.5 L89.8,63.5 L92.2,65.6 Q93,66.4 93,67.2 L93,70.4 Q93,71.2 92,71.7 L87,73.7 Q86,74.1 85,73.6 L79.8,71 Q79,70.6 79,69.8Z" fill="#9a9a9a" stroke="#787878" stroke-width=".7"/><path d="M79.4,66 L81.9,63.9 L89.6,63.9 L92.6,66.7 L86.1,69.2Z" fill="#d2d2d2"/><path d="M82,64.3 L89.4,64.3" stroke="#8e8e8e" stroke-width=".9"/><path d="M79.4,66.6 L86.1,69.7 L92.6,67.3" fill="none" stroke="#5e5e5e" stroke-width="1"/><path d="M79.4,68 L86.1,71.1 L92.6,68.7" fill="none" stroke="#f8f8f8" stroke-width="1.3"/><path d="M79.4,69.4 L86.1,72.4 L92.6,70" fill="none" stroke="#565656" stroke-width="1"/><path d="M80,70.6 L86,73.3 L92.2,71" fill="none" stroke="#d8d8d8" stroke-width=".9"/><rect x="90" y="67.4" width="1.3" height="1.3" fill="#3cc03c"/><rect x="85.4" y="72.6" width="1.4" height="1" fill="#5a6ad0"/></g><rect x="101" y="55" width="1" height="24" fill="#8c8c90"/><rect x="102" y="55" width="1" height="24" fill="#fbfbfc"/><rect x="133" y="55" width="1" height="24" fill="#8c8c90"/><rect x="134" y="55" width="1" height="24" fill="#fbfbfc"/><rect x="189" y="55" width="1" height="24" fill="#8c8c90"/><rect x="190" y="55" width="1" height="24" fill="#fbfbfc"/><g><rect x="112.5" y="58.3" width="10.3" height="9.5" fill="url(#wn)" stroke="#2c4a9c" stroke-width="1"/><rect x="112" y="57.8" width="11.3" height="2.4" fill="#2c4a9c"/><rect x="110.5" y="61.5" width="9.9" height="9" fill="url(#wn)" stroke="#2c4a9c" stroke-width="1"/><rect x="110" y="61" width="10.9" height="2.4" fill="#2c4a9c"/><ellipse cx="114.7" cy="70.6" rx="3.2" ry="2.6" fill="#e8eef8" stroke="#9db4d6" stroke-width="1.5"/><ellipse cx="122.3" cy="70.6" rx="3.2" ry="2.6" fill="#e8eef8" stroke="#9db4d6" stroke-width="1.5"/><ellipse cx="114.7" cy="70.6" rx="3.9" ry="3.3" fill="none" stroke="#6c86b4" stroke-width=".5"/><ellipse cx="122.3" cy="70.6" rx="3.9" ry="3.3" fill="none" stroke="#6c86b4" stroke-width=".5"/><path d="M113.2,70.2 Q114.7,68.9 116.4,70" fill="none" stroke="#26386c" stroke-width=".9"/><path d="M120.6,70 Q122.3,68.9 123.8,70.2" fill="none" stroke="#26386c" stroke-width=".9"/><rect x="114.6" y="70.3" width="7.8" height="1.5" rx=".7" fill="#1a2a58"/></g><rect x="138" y="55" width="23" height="23" fill="#a7a6ab"/><path d="M138.5,78 L138.5,55.5 L161,55.5" fill="none" stroke="#77767a" stroke-width="1"/><path d="M139.5,78 L139.5,56.5 L161,56.5" fill="none" stroke="#fbfbfc" stroke-width="1"/><rect x="145.5" y="58.6" width="9" height="14" fill="url(#cb)" stroke="#26387c" stroke-width="1"/><rect x="167" y="59.2" width="14.6" height="14.2" fill="#7c88a8"/><rect x="166.4" y="58.6" width="14" height="13.8" fill="#f4f8ff" stroke="#26387c" stroke-width="1"/><rect x="168" y="61" width="4.9" height="4" fill="#e26464"/><rect x="168" y="67" width="4.9" height="3.9" fill="#6868e2"/><rect x="175" y="62" width="4.2" height="1.2" fill="#000"/><rect x="175" y="68" width="4.2" height="1.2" fill="#000"/><path d="M203.5,59.8 L203.5,71.2 L206.2,68.9 L208.2,73.4 L210.2,72.5 L208.2,68.1 L211.6,67.7Z" fill="#fff" stroke="#000" stroke-width="1.1" stroke-linejoin="miter"/><rect x="222.5" y="58.6" width="15" height="15" fill="url(#pi)" stroke="#7c8490" stroke-width="1"/><rect x="222" y="58.1" width="16" height="3" fill="#3c5c94"/><rect x="223" y="59" width="14" height="1.4" fill="#9cc8e4"/><rect x="230.5" y="61" width="7" height="12.4" fill="#d8d8d8"/><rect x="230" y="61" width="1" height="12.4" fill="#8c8c8c"/><rect x="232.2" y="64.2" width="4" height="1.1" fill="#000"/><rect x="232.2" y="67.2" width="4" height="1.1" fill="#000"/><rect x="232.2" y="70.2" width="4" height="1.1" fill="#000"/></svg></div><div class="sep2"></div><div class="sep2b"></div><div class="fig"><svg class="plot" width="560" height="420" viewBox="0 0 560 420"><defs><linearGradient id="par" x1="0" y1="1" x2="0" y2="0"><stop offset="0" stop-color="#3e26a8"/><stop offset="0.05" stop-color="#4332cb"/><stop offset="0.1" stop-color="#4741e5"/><stop offset="0.14" stop-color="#4852f4"/><stop offset="0.19" stop-color="#4563fd"/><stop offset="0.24" stop-color="#3875fe"/><stop offset="0.29" stop-color="#2e87f7"/><stop offset="0.33" stop-color="#2797eb"/><stop offset="0.38" stop-color="#20a5e3"/><stop offset="0.43" stop-color="#12b1d6"/><stop offset="0.48" stop-color="#02bac3"/><stop offset="0.52" stop-color="#24c1ae"/><stop offset="0.57" stop-color="#37c897"/><stop offset="0.62" stop-color="#57cc7a"/><stop offset="0.67" stop-color="#81cc59"/><stop offset="0.71" stop-color="#abc739"/><stop offset="0.76" stop-color="#d1bf27"/><stop offset="0.81" stop-color="#f0ba36"/><stop offset="0.86" stop-color="#fec338"/><stop offset="0.9" stop-color="#fad62d"/><stop offset="0.95" stop-color="#f5e924"/><stop offset="1" stop-color="#f9fb15"/></linearGradient></defs><polygon points="419.6,373.6 62.2,371.5 65.5,31.5 422.9,33.6" fill="#fff"/><path d="M419.6,373.6L422.9,33.6M419.6,373.6L62.2,371.5M360.03,373.25L363.33,33.25M420.15,316.93L62.75,314.83M300.47,372.9L303.77,32.9M420.7,260.27L63.3,258.17M240.9,372.55L244.2,32.55M421.25,203.6L63.85,201.5M181.33,372.2L184.63,32.2M421.8,146.93L64.4,144.83M121.77,371.85L125.07,31.85M422.35,90.27L64.95,88.17M62.2,371.5L65.5,31.5M422.9,33.6L65.5,31.5" stroke="#dfdfdf" stroke-width="1" fill="none"/><polygon points="65.5,31.5 95.28,31.68 95.01,60.01 65.22,59.83" fill="#2698ea"/><polygon points="95.28,31.68 125.07,31.85 124.79,60.18 95.01,60.01" fill="#1fa5e2"/><polygon points="125.07,31.85 154.85,32.02 154.57,60.36 124.79,60.18" fill="#07bcbf"/><polygon points="154.85,32.02 184.63,32.2 184.36,60.53 154.57,60.36" fill="#4bcb83"/><polygon points="184.63,32.2 214.42,32.38 214.14,60.71 184.36,60.53" fill="#2994ed"/><polygon points="214.42,32.38 244.2,32.55 243.92,60.88 214.14,60.71" fill="#2994ed"/><polygon points="244.2,32.55 273.98,32.73 273.71,61.06 243.92,60.88" fill="#4bcb83"/><polygon points="273.98,32.73 303.77,32.9 303.49,61.23 273.71,61.06" fill="#07bcbf"/><polygon points="303.77,32.9 333.55,33.08 333.27,61.41 303.49,61.23" fill="#1fa5e2"/><polygon points="333.55,33.08 363.33,33.25 363.06,61.58 333.27,61.41" fill="#2698ea"/><polygon points="363.33,33.25 393.12,33.43 392.84,61.76 363.06,61.58" fill="#29c3a9"/><polygon points="65.22,59.83 95.01,60.01 94.73,88.34 64.95,88.17" fill="#2e87f7"/><polygon points="95.01,60.01 124.79,60.18 124.52,88.52 94.73,88.34" fill="#2698ea"/><polygon points="124.79,60.18 154.57,60.36 154.3,88.69 124.52,88.52" fill="#31c6a0"/><polygon points="154.57,60.36 184.36,60.53 184.08,88.87 154.3,88.69" fill="#f1ba37"/><polygon points="184.36,60.53 214.14,60.71 213.87,89.04 184.08,88.87" fill="#3f6eff"/><polygon points="214.14,60.71 243.92,60.88 243.65,89.22 213.87,89.04" fill="#465ffb"/><polygon points="243.92,60.88 273.71,61.06 273.43,89.39 243.65,89.22" fill="#e9bb30"/><polygon points="273.71,61.06 303.49,61.23 303.22,89.57 273.43,89.39" fill="#3fca8e"/><polygon points="303.49,61.23 333.27,61.41 333,89.74 303.22,89.57" fill="#2994ed"/><polygon points="333.27,61.41 363.06,61.58 362.78,89.92 333,89.74" fill="#3678fd"/><polygon points="363.06,61.58 392.84,61.76 392.57,90.09 362.78,89.92" fill="#81cc59"/><polygon points="64.95,88.17 94.73,88.34 94.46,116.68 64.67,116.5" fill="#f8ba3d"/><polygon points="94.73,88.34 124.52,88.52 124.24,116.85 94.46,116.68" fill="#3fca8e"/><polygon points="124.52,88.52 154.3,88.69 154.02,117.02 124.24,116.85" fill="#2994ed"/><polygon points="154.3,88.69 184.08,88.87 183.81,117.2 154.02,117.02" fill="#2f80fa"/><polygon points="184.08,88.87 213.87,89.04 213.59,117.38 183.81,117.2" fill="#66cd6d"/><polygon points="213.87,89.04 243.65,89.22 243.37,117.55 213.59,117.38" fill="#85cb55"/><polygon points="243.65,89.22 273.43,89.39 273.16,117.73 243.37,117.55" fill="#327cfc"/><polygon points="273.43,89.39 303.22,89.57 302.94,117.9 273.16,117.73" fill="#2994ed"/><polygon points="303.22,89.57 333,89.74 332.72,118.08 302.94,117.9" fill="#3fca8e"/><polygon points="333,89.74 362.78,89.92 362.51,118.25 332.72,118.08" fill="#f1ba37"/><polygon points="362.78,89.92 392.57,90.09 392.29,118.43 362.51,118.25" fill="#465ffb"/><polygon points="64.67,116.5 94.46,116.68 94.18,145.01 64.4,144.83" fill="#4bcb83"/><polygon points="94.46,116.68 124.24,116.85 123.97,145.18 94.18,145.01" fill="#21c1b1"/><polygon points="124.24,116.85 154.02,117.02 153.75,145.36 123.97,145.18" fill="#1fa5e2"/><polygon points="154.02,117.02 183.81,117.2 183.53,145.53 153.75,145.36" fill="#2698ea"/><polygon points="183.81,117.2 213.59,117.38 213.32,145.71 183.53,145.53" fill="#25c2ad"/><polygon points="213.59,117.38 243.37,117.55 243.1,145.88 213.32,145.71" fill="#2dc4a5"/><polygon points="243.37,117.55 273.16,117.73 272.88,146.06 243.1,145.88" fill="#2698ea"/><polygon points="273.16,117.73 302.94,117.9 302.67,146.23 272.88,146.06" fill="#21a3e3"/><polygon points="302.94,117.9 332.72,118.08 332.45,146.41 302.67,146.23" fill="#21c1b1"/><polygon points="332.72,118.08 362.51,118.25 362.23,146.58 332.45,146.41" fill="#54cc7c"/><polygon points="362.51,118.25 392.29,118.43 392.02,146.76 362.23,146.58" fill="#2994ed"/><polygon points="64.4,144.83 94.18,145.01 93.91,173.34 64.12,173.17" fill="#0ebdbb"/><polygon points="94.18,145.01 123.97,145.18 123.69,173.52 93.91,173.34" fill="#01b8c9"/><polygon points="123.97,145.18 153.75,145.36 153.47,173.69 123.69,173.52" fill="#17aeda"/><polygon points="153.75,145.36 183.53,145.53 183.26,173.87 153.47,173.69" fill="#1ea7e1"/><polygon points="183.53,145.53 213.32,145.71 213.04,174.04 183.26,173.87" fill="#12b1d6"/><polygon points="213.32,145.71 243.1,145.88 242.82,174.22 213.04,174.04" fill="#01b8c9"/><polygon points="243.1,145.88 272.88,146.06 272.61,174.39 242.82,174.22" fill="#17aeda"/><polygon points="272.88,146.06 302.67,146.23 302.39,174.57 272.61,174.39" fill="#17aeda"/><polygon points="302.67,146.23 332.45,146.41 332.17,174.74 302.39,174.57" fill="#01b8c9"/><polygon points="332.45,146.41 362.23,146.58 361.96,174.92 332.17,174.74" fill="#0ebdbb"/><polygon points="362.23,146.58 392.02,146.76 391.74,175.09 361.96,174.92" fill="#1caadf"/><polygon points="64.12,173.17 93.91,173.34 93.63,201.68 63.85,201.5" fill="#0ebdbb"/><polygon points="93.91,173.34 123.69,173.52 123.42,201.85 93.63,201.68" fill="#01b8c9"/><polygon points="123.69,173.52 153.47,173.69 153.2,202.02 123.42,201.85" fill="#17aeda"/><polygon points="153.47,173.69 183.26,173.87 182.98,202.2 153.2,202.02" fill="#06b5cf"/><polygon points="183.26,173.87 213.04,174.04 212.77,202.38 182.98,202.2" fill="#08b5d0"/><polygon points="213.04,174.04 242.82,174.22 242.55,202.55 212.77,202.38" fill="#12b1d6"/><polygon points="242.82,174.22 272.61,174.39 272.33,202.73 242.55,202.55" fill="#17aeda"/><polygon points="272.61,174.39 302.39,174.57 302.12,202.9 272.33,202.73" fill="#17aeda"/><polygon points="302.39,174.57 332.17,174.74 331.9,203.08 302.12,202.9" fill="#01b8c9"/><polygon points="332.17,174.74 361.96,174.92 361.68,203.25 331.9,203.08" fill="#17bfb6"/><polygon points="361.96,174.92 391.74,175.09 391.47,203.43 361.68,203.25" fill="#1caadf"/><polygon points="63.85,201.5 93.63,201.68 93.36,230.01 63.57,229.83" fill="#5dcc75"/><polygon points="93.63,201.68 123.42,201.85 123.14,230.18 93.36,230.01" fill="#17bfb6"/><polygon points="123.42,201.85 153.2,202.02 152.92,230.36 123.14,230.18" fill="#1fa5e2"/><polygon points="153.2,202.02 182.98,202.2 182.71,230.53 152.92,230.36" fill="#2698ea"/><polygon points="182.98,202.2 212.77,202.38 212.49,230.71 182.71,230.53" fill="#25c2ad"/><polygon points="212.77,202.38 242.55,202.55 242.27,230.88 212.49,230.71" fill="#17bfb6"/><polygon points="242.55,202.55 272.33,202.73 272.06,231.06 242.27,230.88" fill="#2698ea"/><polygon points="272.33,202.73 302.12,202.9 301.84,231.23 272.06,231.06" fill="#21a3e3"/><polygon points="302.12,202.9 331.9,203.08 331.62,231.41 301.84,231.23" fill="#0ebdbb"/><polygon points="331.9,203.08 361.68,203.25 361.41,231.58 331.62,231.41" fill="#4bcb83"/><polygon points="361.68,203.25 391.47,203.43 391.19,231.76 361.41,231.58" fill="#2994ed"/><polygon points="63.57,229.83 93.36,230.01 93.08,258.34 63.3,258.17" fill="#fcbd3d"/><polygon points="93.36,230.01 123.14,230.18 122.87,258.52 93.08,258.34" fill="#54cc7c"/><polygon points="123.14,230.18 152.92,230.36 152.65,258.69 122.87,258.52" fill="#2b91ef"/><polygon points="152.92,230.36 182.71,230.53 182.43,258.87 152.65,258.69" fill="#3678fd"/><polygon points="182.71,230.53 212.49,230.71 212.22,259.04 182.43,258.87" fill="#85cb55"/><polygon points="212.49,230.71 242.27,230.88 242,259.22 212.22,259.04" fill="#66cd6d"/><polygon points="242.27,230.88 272.06,231.06 271.78,259.39 242,259.22" fill="#2e87f7"/><polygon points="272.06,231.06 301.84,231.23 301.57,259.57 271.78,259.39" fill="#2994ed"/><polygon points="301.84,231.23 331.62,231.41 331.35,259.74 301.57,259.57" fill="#3fca8e"/><polygon points="331.62,231.41 361.41,231.58 361.13,259.92 331.35,259.74" fill="#e2bc2b"/><polygon points="361.41,231.58 391.19,231.76 390.92,260.09 361.13,259.92" fill="#465ffb"/><polygon points="63.3,258.17 93.08,258.34 92.81,286.68 63.02,286.5" fill="#3678fd"/><polygon points="93.08,258.34 122.87,258.52 122.59,286.85 92.81,286.68" fill="#2698ea"/><polygon points="122.87,258.52 152.65,258.69 152.38,287.02 122.59,286.85" fill="#3fca8e"/><polygon points="152.65,258.69 182.43,258.87 182.16,287.2 152.38,287.02" fill="#fcbd3d"/><polygon points="182.43,258.87 212.22,259.04 211.94,287.38 182.16,287.2" fill="#4367fd"/><polygon points="212.22,259.04 242,259.22 241.72,287.55 211.94,287.38" fill="#3f6eff"/><polygon points="242,259.22 271.78,259.39 271.51,287.73 241.72,287.55" fill="#dfbc2a"/><polygon points="271.78,259.39 301.57,259.57 301.29,287.9 271.51,287.73" fill="#37c897"/><polygon points="301.57,259.57 331.35,259.74 331.07,288.08 301.29,287.9" fill="#2698ea"/><polygon points="331.35,259.74 361.13,259.92 360.86,288.25 331.07,288.08" fill="#2e87f7"/><polygon points="361.13,259.92 390.92,260.09 390.64,288.43 360.86,288.25" fill="#54cc7c"/><polygon points="63.02,286.5 92.81,286.68 92.53,315.01 62.75,314.83" fill="#2698ea"/><polygon points="92.81,286.68 122.59,286.85 122.32,315.18 92.53,315.01" fill="#2698ea"/><polygon points="122.59,286.85 152.38,287.02 152.1,315.36 122.32,315.18" fill="#0ebdbb"/><polygon points="152.38,287.02 182.16,287.2 181.88,315.53 152.1,315.36" fill="#54cc7c"/><polygon points="182.16,287.2 211.94,287.38 211.67,315.71 181.88,315.53" fill="#2994ed"/><polygon points="211.94,287.38 241.72,287.55 241.45,315.88 211.67,315.71" fill="#2994ed"/><polygon points="241.72,287.55 271.51,287.73 271.23,316.06 241.45,315.88" fill="#4bcb83"/><polygon points="271.51,287.73 301.29,287.9 301.02,316.23 271.23,316.06" fill="#0ebdbb"/><polygon points="301.29,287.9 331.07,288.08 330.8,316.41 301.02,316.23" fill="#1fa5e2"/><polygon points="331.07,288.08 360.86,288.25 360.58,316.58 330.8,316.41" fill="#21a3e3"/><polygon points="360.86,288.25 390.64,288.43 390.37,316.76 360.58,316.58" fill="#17bfb6"/><polygon points="62.75,314.83 92.53,315.01 92.26,343.34 62.47,343.17" fill="#12b1d6"/><polygon points="92.53,315.01 122.32,315.18 122.04,343.52 92.26,343.34" fill="#17aeda"/><polygon points="122.32,315.18 152.1,315.36 151.83,343.69 122.04,343.52" fill="#08b5d0"/><polygon points="152.1,315.36 181.88,315.53 181.61,343.87 151.83,343.69" fill="#01b8c9"/><polygon points="181.88,315.53 211.67,315.71 211.39,344.04 181.61,343.87" fill="#17aeda"/><polygon points="211.67,315.71 241.45,315.88 241.18,344.22 211.39,344.04" fill="#1ea7e1"/><polygon points="241.45,315.88 271.23,316.06 270.96,344.39 241.18,344.22" fill="#07bcbf"/><polygon points="271.23,316.06 301.02,316.23 300.74,344.57 270.96,344.39" fill="#01b8c9"/><polygon points="301.02,316.23 330.8,316.41 330.52,344.74 300.74,344.57" fill="#17aeda"/><polygon points="330.8,316.41 360.58,316.58 360.31,344.92 330.52,344.74" fill="#17aeda"/><polygon points="360.58,316.58 390.37,316.76 390.09,345.09 360.31,344.92" fill="#12b1d6"/><path d="M360.31,344.92L363.33,33.25M390.37,316.76L62.75,314.83M330.52,344.74L333.55,33.08M390.64,288.43L63.02,286.5M300.74,344.57L303.77,32.9M390.92,260.09L63.3,258.17M270.96,344.39L273.98,32.73M391.19,231.76L63.57,229.83M241.18,344.22L244.2,32.55M391.47,203.43L63.85,201.5M211.39,344.04L214.42,32.38M391.74,175.09L64.12,173.17M181.61,343.87L184.63,32.2M392.02,146.76L64.4,144.83M151.83,343.69L154.85,32.02M392.29,118.43L64.67,116.5M122.04,343.52L125.07,31.85M392.57,90.09L64.95,88.17M92.26,343.34L95.28,31.68M392.84,61.76L65.22,59.83M390.09,345.09L62.47,343.17L65.5,31.5L393.12,33.43Z" stroke="#000" stroke-width="1.12" fill="none" stroke-linejoin="miter"/><path d="M62.2,371.5L419.6,373.6L422.9,33.6" stroke="#333" stroke-width="1" fill="none"/><path d="M419.6,373.6l0.08,9M419.6,373.6l9.4,0.06M360.03,373.25l0.08,9M420.15,316.93l9.4,0.06M300.47,372.9l0.08,9M420.7,260.27l9.4,0.06M240.9,372.55l0.08,9M421.25,203.6l9.4,0.06M181.33,372.2l0.08,9M421.8,146.93l9.4,0.06M121.77,371.85l0.08,9M422.35,90.27l9.4,0.06M62.2,371.5l0.08,9M422.9,33.6l9.4,0.06" stroke="#4a4a4a" stroke-width="1.5" fill="none"/><g font-size="13.33" fill="#262626"><text x="419.6" y="401.1" text-anchor="middle">0</text><text x="433.2" y="378.9">0</text><text x="360.03" y="400.75" text-anchor="middle">2</text><text x="433.75" y="322.23">2</text><text x="300.47" y="400.4" text-anchor="middle">4</text><text x="434.3" y="265.57">4</text><text x="240.9" y="400.05" text-anchor="middle">6</text><text x="434.85" y="208.9">6</text><text x="181.33" y="399.7" text-anchor="middle">8</text><text x="435.4" y="152.23">8</text><text x="121.77" y="399.35" text-anchor="middle">10</text><text x="435.95" y="95.57">10</text><text x="62.2" y="398" text-anchor="middle">12</text><text x="436.5" y="38.9">12</text></g><text transform="translate(470.7,205) rotate(-90)" font-size="14.67" fill="#262626" text-anchor="middle">HCM Number</text><rect x="467.5" y="31.2" width="20" height="342.3" fill="url(#par)" stroke="#3a3a3a" stroke-width="1"/><path d="M487.5,324.6l-3.5,0M487.5,275.7l-3.5,0M487.5,226.8l-3.5,0M487.5,177.9l-3.5,0M487.5,129l-3.5,0M487.5,80.1l-3.5,0" stroke="#3a3a3a" stroke-width="1" fill="none"/><g font-size="13.33" fill="#262626"><text x="493.1" y="379" letter-spacing="-0.8">-3</text><text x="493.1" y="330.1" letter-spacing="-0.8">-2</text><text x="493.1" y="281.2" letter-spacing="-0.8">-1</text><text x="493.1" y="232.3">0</text><text x="493.1" y="183.4">1</text><text x="493.1" y="134.5">2</text><text x="493.1" y="85.6">3</text><text x="493.1" y="36.7">4</text></g><text x="237.6" y="413" font-size="14.67" fill="#262626" text-anchor="middle">BPMx Number</text><text x="242.8" y="23.8" font-size="14.67" font-weight="bold" fill="#000" text-anchor="middle" letter-spacing="-0.25">Measured</text></svg></div></div>
</body></html>
